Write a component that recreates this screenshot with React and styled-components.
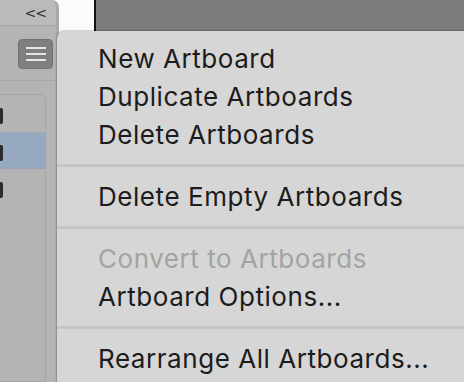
import React from 'react';
import styled, { createGlobalStyle } from 'styled-components';

const GlobalStyle = createGlobalStyle`
  html, body {
    margin: 0;
    padding: 0;
    background: #ffffff;
    overflow: hidden;
  }
  * { box-sizing: border-box; }
`;

const Screen = styled.div`
  position: relative;
  width: 464px;
  height: 382px;
  overflow: hidden;
  display: flex;
  font-family: Inter, "Liberation Sans", sans-serif;
`;

const SidePanel = styled.div`
  width: 59px;
  height: 100%;
  background: #b4b4b4;
  border-top-right-radius: 7px;
  border-right: 3px solid #a9a9a9;
  display: flex;
  flex-direction: column;
`;

const PanelHeader = styled.div`
  height: 26px;
  background: #bababa;
  border-bottom: 1px solid #a6a6a6;
  border-top-right-radius: 7px;
  display: flex;
  align-items: center;
  justify-content: flex-end;
  padding: 1px 10px 0 0;
  font-family: "DejaVu Sans", sans-serif;
  font-size: 14px;
  color: #2e2e2e;
  letter-spacing: -1px;
`;

const PanelToolbar = styled.div`
  height: 55px;
  border-bottom: 1px solid #a6a6a6;
  display: flex;
  align-items: flex-start;
  padding: 13px 0 0 18px;
`;

const MenuButton = styled.div`
  width: 35px;
  height: 30px;
  border-radius: 4px;
  background: #7f7f7f;
  border: 1px solid #727272;
  display: flex;
  flex-direction: column;
  justify-content: center;
  align-items: center;
  gap: 4px;
`;

const Bar = styled.span`
  display: block;
  width: 20px;
  height: 2px;
  background: #e6e6e6;
`;

const ListBox = styled.div`
  margin: 13px 10px 0 -6px;
  border: 1px solid #a5a5a5;
  border-radius: 0 5px 0 0;
  flex: 1;
`;

const ListRow = styled.div`
  height: 37px;
  background: ${p => (p.$selected ? '#97a8c1' : 'transparent')};
  border-bottom: 1px solid ${p => (p.$selected ? '#9aa6b6' : 'transparent')};
  border-top: 1px solid ${p => (p.$selected ? '#a4adb9' : 'transparent')};
  display: flex;
  align-items: center;
`;

const RowGlyph = styled.span`
  width: 8px;
  height: 16px;
  border-radius: 2px;
  background: #2b2b2b;
  margin-top: 4px;
`;

const Main = styled.div`
  flex: 1;
  display: flex;
  flex-direction: column;
`;

const TopStrip = styled.div`
  height: 32px;
  display: flex;
`;

const BlankArea = styled.div`
  width: 37px;
  background: #fbfbfb;
  border-right: 2px solid #111111;
`;

const Canvas = styled.div`
  flex: 1;
  background: #7b7b7b;
  border-bottom: 1px solid #5f5f5f;
`;

const Dropdown = styled.div`
  position: absolute;
  left: 57px;
  top: 31px;
  right: -10px;
  bottom: -10px;
  background: #d6d6d6;
  border-radius: 8px;
  padding-top: 9px;
  box-shadow: -1px 0 2px rgba(0, 0, 0, 0.18), 0 -1px 1px rgba(0, 0, 0, 0.12);
`;

const Item = styled.div`
  height: 38px;
  line-height: 38px;
  padding-left: 41px;
  font-size: 26px;
  color: ${p => (p.$disabled ? '#a3a3a3' : '#1c1c1c')};
  white-space: nowrap;
  letter-spacing: 0.55px;
`;

const Separator = styled.div`
  height: 3px;
  margin: 10px 0 11px;
  background: #c5c5c5;
`;

const menu = [
  ['New Artboard', 'Duplicate Artboards', 'Delete Artboards'],
  ['Delete Empty Artboards'],
  [{ label: 'Convert to Artboards', disabled: true }, 'Artboard Options...'],
  ['Rearrange All Artboards...'],
];

export default function App() {
  return (
    <>
      <GlobalStyle />
      <Screen>
        <SidePanel>
          <PanelHeader>&lt;&lt;</PanelHeader>
          <PanelToolbar>
            <MenuButton>
              <Bar />
              <Bar />
              <Bar />
            </MenuButton>
          </PanelToolbar>
          <ListBox>
            <ListRow><RowGlyph /></ListRow>
            <ListRow $selected><RowGlyph /></ListRow>
            <ListRow><RowGlyph /></ListRow>
          </ListBox>
        </SidePanel>
        <Main>
          <TopStrip>
            <BlankArea />
            <Canvas />
          </TopStrip>
        </Main>
        <Dropdown>
          {menu.map((group, gi) => (
            <React.Fragment key={gi}>
              {gi > 0 && <Separator />}
              {group.map(entry => {
                const item = typeof entry === 'string' ? { label: entry } : entry;
                return (
                  <Item key={item.label} $disabled={item.disabled}>
                    {item.label}
                  </Item>
                );
              })}
            </React.Fragment>
          ))}
        </Dropdown>
      </Screen>
    </>
  );
}
